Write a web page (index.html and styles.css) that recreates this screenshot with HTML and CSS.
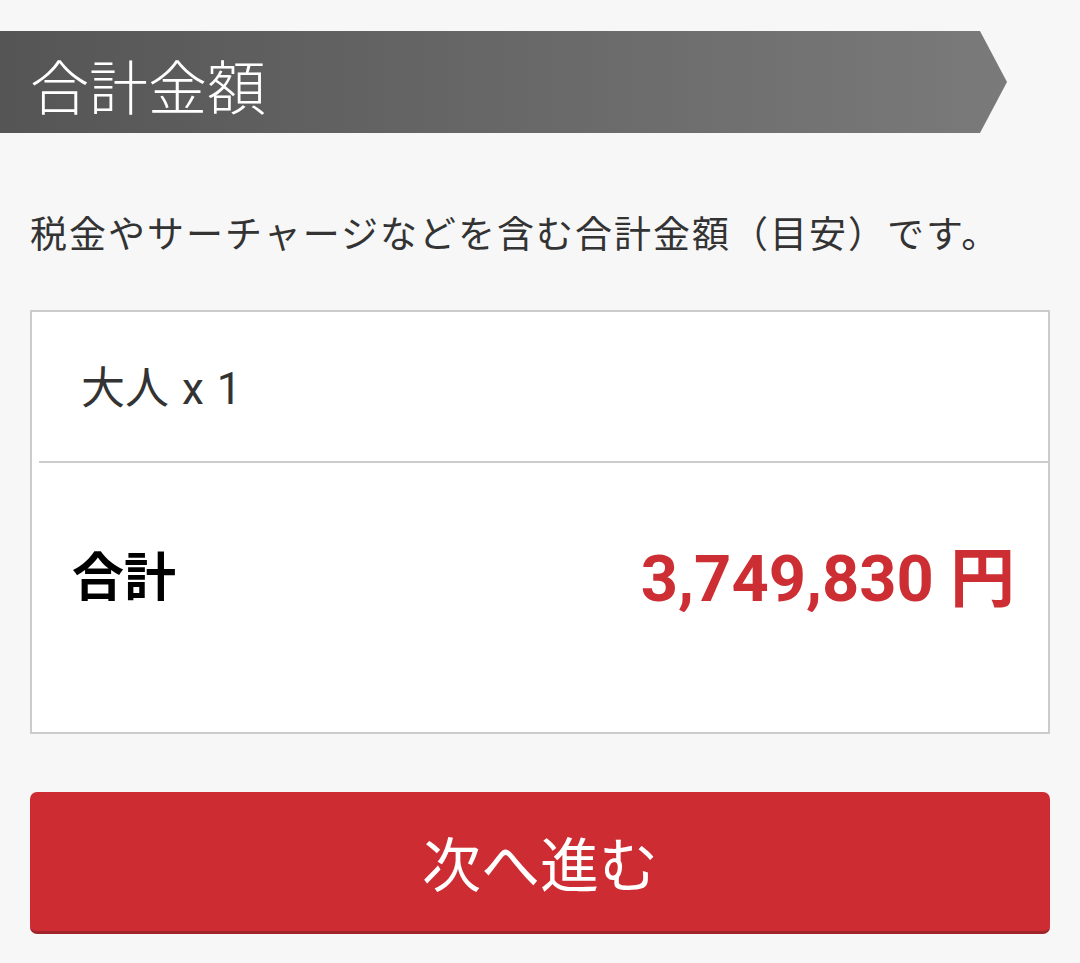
FILE: index.html
```html
<!DOCTYPE html>
<html lang="ja">
<head>
<meta charset="utf-8">
<link rel="stylesheet" href="styles.css">
</head>
<body>
<div class="page">
  <div class="banner"><h1 class="banner-title">合計金額</h1></div>
  <p class="note">税金やサーチャージなどを含む合計金額（目安）です。</p>
  <div class="card">
    <div class="pax">大人 x 1</div>
    <div class="divider"></div>
    <div class="total-row">
      <span class="total-label">合計</span>
      <span class="total-price">3,749,830 円</span>
    </div>
  </div>
  <button class="next-btn">次へ進む</button>
</div>
</body>
</html>
```

FILE: styles.css
```css
* { box-sizing: border-box; }
html, body {
  margin: 0;
  padding: 0;
  background: #f7f7f7;
}
body {
  font-family: Roboto, "Noto Sans CJK JP", sans-serif;
  color: #333;
}
.page {
  padding-top: 31px;
}
.banner {
  width: 1007px;
  height: 102px;
  background: linear-gradient(to right, #555555, #7a7a7a);
  clip-path: polygon(0 0, 980px 0, 1007px 51px, 980px 102px, 0 102px);
  display: flex;
  align-items: center;
  padding: 5px 0 0 30px;
}
.banner-title {
  margin: 0;
  font-family: "Noto Sans CJK JP", sans-serif;
  font-weight: 300;
  font-size: 59px;
  line-height: 1;
  color: #fff;
}
.note {
  margin: 0;
  padding: 20px 0 0 30px;
  height: 177px;
  display: flex;
  align-items: center;
  font-family: "Noto Sans CJK JP", sans-serif;
  font-size: 37px;
  letter-spacing: 2px;
  color: #333;
}
.card {
  margin: 0 30px;
  background: #fff;
  border: 2px solid #cccccc;
  height: 424px;
}
.pax {
  height: 149px;
  display: flex;
  align-items: center;
  padding: 0 0 4px 49px;
  font-family: Roboto, "Noto Sans CJK JP", sans-serif;
  font-size: 44px;
  word-spacing: 2px;
  color: #333;
}
.divider {
  margin-left: 7px;
  margin-right: -2px;
  border-top: 2px solid #cccccc;
}
.total-row {
  display: flex;
  justify-content: space-between;
  align-items: center;
  padding: 70px 33px 0 40px;
  height: 150px;
}
.total-label {
  font-family: "Noto Sans CJK JP", sans-serif;
  font-weight: 700;
  font-size: 52px;
  color: #000;
}
.total-price {
  font-family: Roboto, "Noto Sans CJK JP", sans-serif;
  font-weight: 700;
  font-size: 65px;
  color: #cc2e33;
}
.next-btn {
  display: block;
  margin: 58px 30px 0;
  width: 1020px;
  height: 142px;
  background: #cc2c32;
  border: none;
  border-bottom: 3px solid #a0252a;
  border-radius: 7px;
  color: #fff;
  font-family: "Noto Sans CJK JP", sans-serif;
  font-weight: 400;
  font-size: 59px;
  padding: 0;
  cursor: pointer;
}
```
